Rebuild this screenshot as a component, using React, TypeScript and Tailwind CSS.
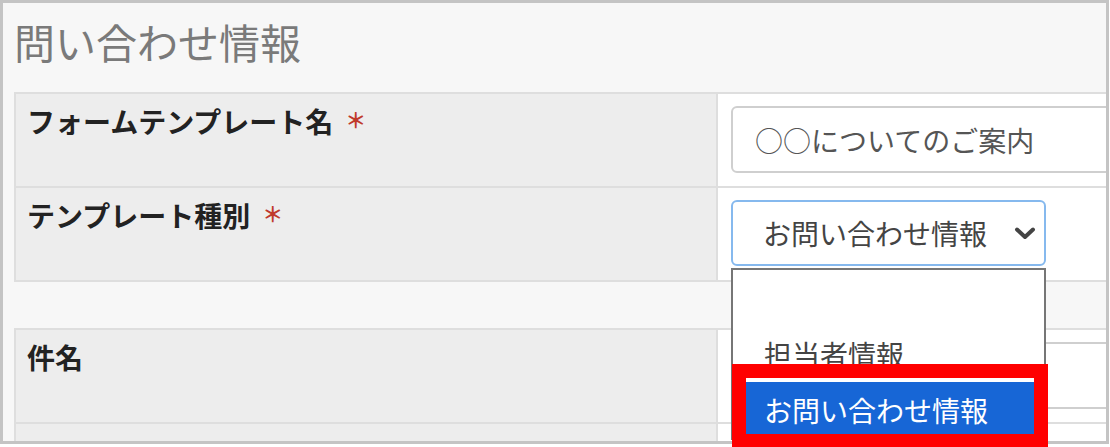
const FONT = "font-['Noto_Sans_CJK_JP','Noto_Sans',sans-serif]";

// ラベルセル＋値セルの1行
function Row({
  label,
  required,
  children,
  bottomBorder,
  labelTop = "pt-[13px]",
}: {
  label: string;
  required?: boolean;
  children?: React.ReactNode;
  bottomBorder?: boolean;
  labelTop?: string;
}) {
  return (
    <div
      className={`flex h-[94px] shrink-0 border-t-2 border-[#dedede] ${
        bottomBorder ? "h-[96px] border-b-2" : ""
      }`}
    >
      <div
        className={`w-[704px] shrink-0 border-x-2 border-[#dedede] bg-[#ededed] pl-[11px] ${labelTop}`}
      >
        <span className="text-[28px] font-bold leading-none text-[#222]">
          {label}
        </span>
        {required && (
          <span className="relative top-[-5px] ml-[12px] text-[21px] font-bold leading-none text-[#c0392b]">
            ＊
          </span>
        )}
      </div>
      <div className="min-w-0 flex-1 bg-white pl-[13px] pt-[12px]">
        {children}
      </div>
    </div>
  );
}

function TextInput({ value }: { value?: string }) {
  return (
    <div className="flex h-[67px] w-[420px] items-center rounded-[6px] border-2 border-[#cfcfcf] bg-white pl-[22px] text-[28px] leading-none text-[#555]">
      {value}
    </div>
  );
}

function Chevron() {
  return (
    <svg width="22" height="14" viewBox="0 0 22 14" fill="none">
      <path
        d="M3 3.5 L11 11 L19 3.5"
        stroke="#444"
        strokeWidth="4"
        strokeLinecap="round"
        strokeLinejoin="round"
      />
    </svg>
  );
}

// 開いた状態のセレクト
function TypeSelect() {
  const options = ["", "担当者情報", "お問い合わせ情報"];
  const selected = 2;

  return (
    <div className="relative flex h-[66px] w-[315px] items-center justify-between rounded-[6px] border-2 border-[#86b9ee] bg-white pl-[30px] pr-[8px] text-[28px] leading-none text-[#444]">
      <span>お問い合わせ情報</span>
      <Chevron />
      <div className="absolute left-[-2px] top-[66px] z-10 w-[315px] border-2 border-[#767676] bg-white">
        {options.map((opt, i) => (
          <div
            key={i}
            className={`flex h-[56px] items-center pl-[31px] text-[28px] leading-none ${
              i === selected ? "bg-[#1766d6] text-white" : "text-[#444]"
            }`}
          >
            {opt}
          </div>
        ))}
      </div>
    </div>
  );
}

export default function App() {
  return (
    <div className={`relative h-[447px] w-[1110px] overflow-hidden bg-white ${FONT}`}>
      <div className="flex h-[444px] w-[1109px] flex-col overflow-hidden border-[3px] border-[#c4c4c4] bg-[#f7f7f7]">
        {/* タイトル */}
        <div className="h-[89px] shrink-0 pl-[11px] pt-[18px] text-[41px] leading-none text-[#7a7a7a]">
          問い合わせ情報
        </div>

        <div className="ml-[11px] flex flex-col">
          <Row label="フォームテンプレート名" required>
            <TextInput value="○○についてのご案内" />
          </Row>
          <Row label="テンプレート種別" required bottomBorder>
            <TypeSelect />
          </Row>

          <div className="h-[46px] shrink-0" />

          <Row label="件名">
            <TextInput />
          </Row>
          <Row label="メールの本文" labelTop="pt-[16px]" />
        </div>
      </div>

      {/* 強調枠 */}
      <div className="absolute left-[732px] top-[364px] z-20 h-[84px] w-[316px] border-[14px] border-[#ff0000]" />
    </div>
  );
}
